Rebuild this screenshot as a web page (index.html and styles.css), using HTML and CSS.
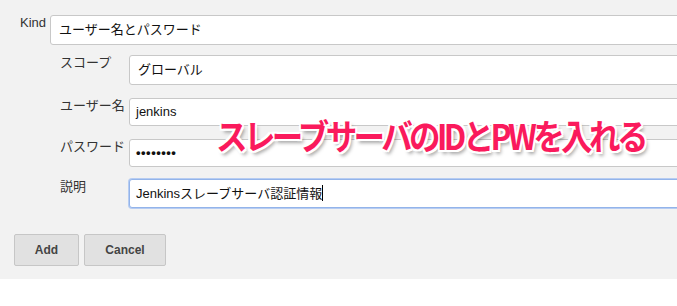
FILE: index.html
```html
<!DOCTYPE html>
<html lang="ja">
  <head>
    <meta charset="UTF-8" />
    <title>Credentials</title>
    <link rel="stylesheet" href="styles.css">
  </head>
  <body>
    <div class="panel">
      <div class="form">
        <div class="row kind-row">
          <span class="label kind-label">Kind</span>
          <div class="field">ユーザー名とパスワード</div>
        </div>
        <div class="sub">
          <div class="row scope-row">
            <span class="label">スコープ</span>
            <div class="field">グローバル</div>
          </div>
          <div class="row user-row">
            <span class="label">ユーザー名</span>
            <div class="field thin">jenkins</div>
          </div>
          <div class="row pass-row">
            <span class="label">パスワード</span>
            <div class="field thin dots">••••••••</div>
          </div>
          <div class="row desc-row">
            <span class="label">説明</span>
            <div class="field thin focused">Jenkinsスレーブサーバ認証情報<span class="caret"></span></div>
          </div>
        </div>
        <div class="buttons">
          <button class="btn add">Add</button>
          <button class="btn cancel">Cancel</button>
        </div>
      </div>
      <div class="note">スレーブサーバのIDとPWを入れる</div>
    </div>
  </body>
</html>
```

FILE: styles.css
```css
body {
  margin: 0;
  background-color: white;
  font-family: "Liberation Sans", "Noto Sans CJK JP", sans-serif;
  font-size: 13px;
  color: #333;
}

.panel {
  position: relative;
  background-color: #f2f2f2;
  height: 279px;
  overflow: hidden;
}

.form {
  width: 760px;
  padding-top: 15px;
}

.row {
  display: flex;
  align-items: flex-start;
}

.label {
  line-height: 16px;
  padding-top: 0;
  color: #333;
}

.kind-label {
  width: 30px;
  padding-left: 20px;
}

.sub {
  padding-left: 60px;
}

.sub .label {
  width: 69px;
}

.field {
  flex: 1;
  height: 28px;
  line-height: 28px;
  padding-left: 8px;
  background-color: white;
  border: 1px solid #c8c8c8;
  border-radius: 3px;
  color: #111;
  white-space: nowrap;
}

.field.thin {
  height: 26px;
  line-height: 26px;
  padding-left: 6px;
}

.scope-row {
  margin-top: 10px;
}

.user-row {
  margin-top: 13px;
}

.pass-row {
  margin-top: 13px;
}

.desc-row {
  margin-top: 12px;
}

.dots {
  font-weight: bold;
  letter-spacing: 0.5px;
}

.field.focused {
  height: 27px;
  line-height: 27px;
  border-color: #93b4ea;
  box-shadow: 0 0 0 1px #b6ccf2;
}

.caret {
  display: inline-block;
  width: 1px;
  height: 16px;
  background-color: #000;
  vertical-align: -3px;
}

.buttons {
  display: flex;
  gap: 5px;
  margin-top: 26px;
  padding-left: 14px;
}

.btn {
  height: 32px;
  background-color: #e1e1e1;
  border: 1px solid #c6c6c6;
  border-radius: 2px;
  font-family: "Liberation Sans", Arial, sans-serif;
  font-size: 12px;
  font-weight: bold;
  color: #444;
}

.add {
  width: 65px;
}

.cancel {
  width: 82px;
}

/* annotation laid over the form */
.note {
  position: absolute;
  left: 216px;
  top: 109px;
  font-family: "Noto Sans CJK JP", sans-serif;
  font-size: 35px;
  font-weight: bold;
  letter-spacing: -4px;
  transform: scaleX(0.9);
  transform-origin: left center;
  color: #fa1a5c;
  text-shadow:
    2px 0 0 #fff, -2px 0 0 #fff, 0 2px 0 #fff, 0 -2px 0 #fff,
    2px 2px 0 #fff, -2px -2px 0 #fff, 2px -2px 0 #fff, -2px 2px 0 #fff,
    3px 4px 4px rgba(0, 0, 0, 0.35);
  white-space: nowrap;
}
```
